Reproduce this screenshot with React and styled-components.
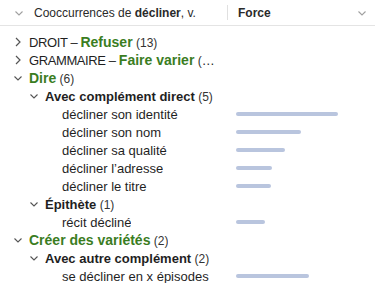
import styled, { createGlobalStyle } from "styled-components"

const GlobalStyle = createGlobalStyle`
  body {
    margin: 0;
    background: #fff;
    font-family: "Liberation Sans", Arial, sans-serif;
    color: #222;
  }
`

const Container = styled.div`
  width: 375px;
  height: 283px;
  overflow: hidden;
  background: #fff;
`

const Header = styled.div`
  display: grid;
  grid-template-columns: 227px 1fr;
  height: 25px;
  border-bottom: 1px solid #e4e4e4;
  font-size: 12px;
  color: #2a2a2a;
`

const HeadCell = styled.div`
  display: flex;
  align-items: center;
  padding-left: ${(p) => p.$pad}px;
  padding-right: 8px;
  position: relative;
  gap: 10px;
`

const Divider = styled.span`
  position: absolute;
  left: 0;
  top: 5px;
  bottom: 5px;
  width: 1px;
  background: #e0e0e0;
`

const HeadLabel = styled.span`
  flex: 1;
  font-weight: ${(p) => (p.$strong ? 600 : 400)};
  b {
    font-weight: 700;
  }
`

const List = styled.div`
  padding-top: 7px;
`

const Row = styled.div`
  display: grid;
  grid-template-columns: 227px 1fr;
  height: 18px;
  align-items: center;
`

const NameCell = styled.div`
  display: flex;
  align-items: center;
  padding-left: ${(p) => p.$indent}px;
  padding-right: 8px;
  min-width: 0;
  gap: 6px;
`

const Label = styled.span`
  white-space: nowrap;
  overflow: hidden;
  text-overflow: ellipsis;
  font-size: 13px;
  color: #1f1f1f;
`

const Domain = styled.span`
  letter-spacing: -0.4px;
`

const Term = styled.span`
  font-weight: 700;
  font-size: ${(p) => (p.$green ? 14 : 13)}px;
  color: ${(p) => (p.$green ? "#3b7d1f" : "#1f1f1f")};
`

const Count = styled.span`
  font-size: 12px;
  color: #333;
`

const ForceCell = styled.div`
  padding-left: 9px;
  display: flex;
  align-items: center;
`

const Bar = styled.div`
  height: 4px;
  border-radius: 2px;
  background: #b9c5de;
`

const Chevron = ({ open, color = "#555" }) => (
  <svg width="10" height="10" viewBox="0 0 10 10" style={{ flex: "none" }}>
    {open ? (
      <polyline points="1.5,3.5 5,7 8.5,3.5" fill="none" stroke={color} strokeWidth="1.1" />
    ) : (
      <polyline points="3,1 7,5 3,9" fill="none" stroke={color} strokeWidth="1.2" />
    )}
  </svg>
)

const rows = [
  { indent: 13, toggle: "closed", prefix: "DROIT – ", term: "Refuser", green: true, count: 13 },
  { indent: 13, toggle: "closed", prefix: "GRAMMAIRE – ", term: "Faire varier", green: true, count: 12 },
  { indent: 13, toggle: "open", term: "Dire", green: true, count: 6 },
  { indent: 29, toggle: "open", term: "Avec complément direct", count: 5 },
  { indent: 62, text: "décliner son identité", force: 102 },
  { indent: 62, text: "décliner son nom", force: 65 },
  { indent: 62, text: "décliner sa qualité", force: 49 },
  { indent: 62, text: "décliner l’adresse", force: 36 },
  { indent: 62, text: "décliner le titre", force: 35 },
  { indent: 29, toggle: "open", term: "Épithète", count: 1 },
  { indent: 62, text: "récit décliné", force: 29 },
  { indent: 13, toggle: "open", term: "Créer des variétés", green: true, count: 2 },
  { indent: 29, toggle: "open", term: "Avec autre complément", count: 2 },
  { indent: 62, text: "se décliner en x épisodes", force: 73 },
]

const App = () => {
  return (
    <Container>
      <GlobalStyle />
      <Header>
        <HeadCell $pad={14}>
          <Chevron open color="#a0a0a0" />
          <HeadLabel>
            Cooccurrences de <b>décliner</b>, v.
          </HeadLabel>
        </HeadCell>
        <HeadCell $pad={11}>
          <Divider />
          <HeadLabel $strong>Force</HeadLabel>
          <Chevron open color="#a0a0a0" />
        </HeadCell>
      </Header>
      <List>
        {rows.map((r, i) => (
          <Row key={i}>
            <NameCell $indent={r.indent}>
              {r.toggle && <Chevron open={r.toggle === "open"} />}
              <Label>
                {r.text}
                {r.prefix && <Domain>{r.prefix}</Domain>}
                {r.term && <Term $green={r.green}>{r.term}</Term>}
                {r.count != null && <Count> ({r.count})</Count>}
              </Label>
            </NameCell>
            <ForceCell>{r.force && <Bar style={{ width: r.force }} />}</ForceCell>
          </Row>
        ))}
      </List>
    </Container>
  )
}

export default App
